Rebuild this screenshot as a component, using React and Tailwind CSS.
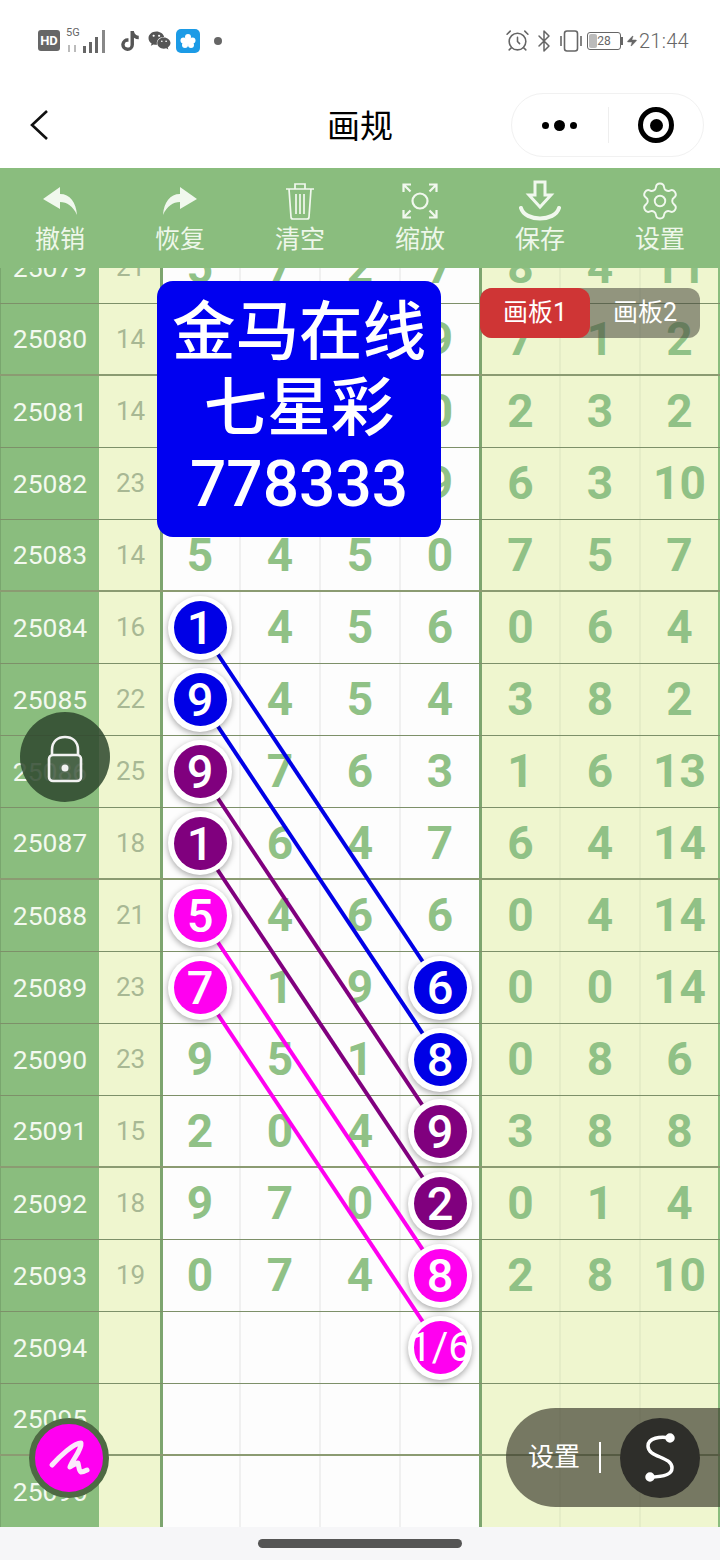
import { AlarmClock, Bluetooth, Zap, Settings } from 'lucide-react'
import { FaTiktok, FaWeixin } from 'react-icons/fa'

const BLUE = 'bg-[#0000e6]'
const PURPLE = 'bg-[#80007e]'
const PINK = 'bg-[#ff00f0]'

// period, sum, four draw columns, three stat columns. marks = column -> colour class
const ROWS = [
  { id: 25079, sum: 21, nums: [5, 7, 2, 7], stats: [8, 4, 11] },
  { id: 25080, sum: 14, nums: [1, 2, 3, 9], stats: [7, 1, 2], thick: true },
  { id: 25081, sum: 14, nums: [4, 3, 7, 0], stats: [2, 3, 2] },
  { id: 25082, sum: 23, nums: [6, 8, 0, 9], stats: [6, 3, 10] },
  { id: 25083, sum: 14, nums: [5, 4, 5, 0], stats: [7, 5, 7], thick: true },
  { id: 25084, sum: 16, nums: [1, 4, 5, 6], stats: [0, 6, 4], marks: { 0: BLUE } },
  { id: 25085, sum: 22, nums: [9, 4, 5, 4], stats: [3, 8, 2], marks: { 0: BLUE } },
  { id: 25086, sum: 25, nums: [9, 7, 6, 3], stats: [1, 6, 13], marks: { 0: PURPLE } },
  { id: 25087, sum: 18, nums: [1, 6, 4, 7], stats: [6, 4, 14], marks: { 0: PURPLE }, thick: true },
  { id: 25088, sum: 21, nums: [5, 4, 6, 6], stats: [0, 4, 14], marks: { 0: PINK } },
  { id: 25089, sum: 23, nums: [7, 1, 9, 6], stats: [0, 0, 14], marks: { 0: PINK, 3: BLUE } },
  { id: 25090, sum: 23, nums: [9, 5, 1, 8], stats: [0, 8, 6], marks: { 3: BLUE } },
  { id: 25091, sum: 15, nums: [2, 0, 4, 9], stats: [3, 8, 8], marks: { 3: PURPLE }, thick: true },
  { id: 25092, sum: 18, nums: [9, 7, 0, 2], stats: [0, 1, 4], marks: { 3: PURPLE } },
  { id: 25093, sum: 19, nums: [0, 7, 4, 8], stats: [2, 8, 10], marks: { 3: PINK } },
  { id: 25094, sum: '', nums: ['', '', '', '1/6'], stats: ['', '', ''], marks: { 3: PINK } },
  { id: 25095, sum: '', nums: ['', '', '', ''], stats: ['', '', ''], thick: true },
  { id: 25096, sum: '', nums: ['', '', '', ''], stats: ['', '', ''] },
]

const LINES = [
  [5, 10, '#0000e6'],
  [6, 11, '#0000e6'],
  [7, 12, '#80007e'],
  [8, 13, '#80007e'],
  [9, 14, '#ff00f0'],
  [10, 15, '#ff00f0'],
]

function StatusBar() {
  return (
    <div className="h-[84px] bg-white flex items-center justify-between pl-[38px] pr-[31px] pb-[3px] text-[#666]">
      <div className="flex items-center h-6">
        <div className="w-[22px] h-[21px] rounded-[3px] bg-[#666] text-white text-[13px] font-bold flex items-center justify-center leading-none">HD</div>
        <div className="relative w-[40px] h-[26px] ml-[6px]">
          <span className="absolute left-0 -top-[1px] text-[11px] leading-none">5G</span>
          <svg width="40" height="26" viewBox="0 0 40 26" className="absolute left-0 top-0">
            <rect x="2" y="17" width="2" height="7" fill="#bbb" />
            <rect x="8" y="17" width="2" height="7" fill="#bbb" />
            <rect x="17" y="18" width="3" height="7" fill="#666" />
            <rect x="23" y="14" width="3" height="11" fill="#666" />
            <rect x="29" y="9" width="3" height="16" fill="#666" />
            <rect x="36" y="2" width="3" height="23" fill="#888" />
          </svg>
        </div>
        <FaTiktok className="ml-[14px] text-[#555]" size={20} />
        <FaWeixin className="ml-[8px] text-[#555]" size={23} />
        <div className="ml-[5px] w-6 h-6 rounded-[5px] bg-[#1c9be6] flex items-center justify-center">
          <svg width="16" height="16" viewBox="0 0 16 16">
            <circle cx="8" cy="4" r="3" fill="#fff" />
            <circle cx="3.5" cy="7.5" r="3" fill="#fff" />
            <circle cx="12.5" cy="7.5" r="3" fill="#fff" />
            <circle cx="5" cy="12" r="3" fill="#fff" />
            <circle cx="11" cy="12" r="3" fill="#fff" />
            <circle cx="8" cy="8.5" r="3" fill="#fff" />
          </svg>
        </div>
        <div className="ml-[14px] w-2 h-2 rounded-full bg-[#666]" />
      </div>
      <div className="flex items-center h-6">
        <AlarmClock size={25} strokeWidth={1.5} />
        <Bluetooth size={24} strokeWidth={1.5} className="ml-[2px]" />
        <svg width="26" height="24" viewBox="0 0 26 24" fill="none" stroke="currentColor" strokeWidth="1.6" className="ml-[2px]">
          <rect x="6.5" y="2" width="13" height="20" rx="2.5" />
          <path d="M3 7v10M23 7v10" />
        </svg>
        <div className="ml-[3px] relative w-[34px] h-[18px] rounded-[3px] border border-[#666] flex items-center justify-center text-[12px] leading-none">
          <div className="absolute left-[1px] top-[1px] bottom-[1px] w-[8px] bg-[#bbb] rounded-[2px]" />
          <span className="relative">28</span>
        </div>
        <div className="w-[2px] h-2 bg-[#666]" />
        <Zap size={12} fill="#666" strokeWidth={1} className="ml-[3px]" />
        <span className="ml-[1px] text-[20px] leading-none tracking-[0.3px] font-light">21:44</span>
      </div>
    </div>
  )
}

function NavBar() {
  return (
    <div className="relative h-[84px] bg-white flex items-center justify-center">
      <svg width="20" height="32" viewBox="0 0 20 32" className="absolute left-[29px] top-[25px]">
        <path d="M18 2 L3 16 L18 30" fill="none" stroke="#111" strokeWidth="2.6" />
      </svg>
      <span className="text-[33px] leading-none text-black">画规</span>
      <div className="absolute left-[511px] top-[9px] w-[193px] h-[64px] rounded-full border border-[#f1f1f1] flex items-center">
        <div className="w-[96px] flex items-center justify-center gap-[5px] pr-[2px]">
          <span className="w-[7px] h-[7px] rounded-full bg-black" />
          <span className="w-[11px] h-[11px] rounded-full bg-black" />
          <span className="w-[7px] h-[7px] rounded-full bg-black" />
        </div>
        <div className="w-px h-9 bg-[#eee]" />
        <div className="flex-1 flex items-center justify-center">
          <div className="w-[36px] h-[36px] rounded-full border-[5px] border-black flex items-center justify-center">
            <div className="w-[13px] h-[13px] rounded-full bg-black" />
          </div>
        </div>
      </div>
    </div>
  )
}

function ToolItem({ label, children }) {
  return (
    <div className="flex flex-col items-center w-[120px]">
      <div className="h-[42px] w-[44px] flex items-center justify-center text-[#f1f8ee]">{children}</div>
      <span className="text-[25px] leading-[30px] text-[#eef7ea] mt-[3px]">{label}</span>
    </div>
  )
}

function Toolbar() {
  return (
    <div className="h-[100px] bg-[#8abd7e] flex pt-[12px] relative z-40">
      <ToolItem label="撤销">
        <svg width="36" height="30" viewBox="0 0 36 30" fill="currentColor">
          <path d="M18 1 L1 13 L18 23 V16 C25 16 31 20 35 29 C34 16 28 8 18 8 Z" />
        </svg>
      </ToolItem>
      <ToolItem label="恢复">
        <svg width="36" height="30" viewBox="0 0 36 30" fill="currentColor">
          <path d="M18 1 L35 13 L18 23 V16 C11 16 5 20 1 29 C2 16 8 8 18 8 Z" />
        </svg>
      </ToolItem>
      <ToolItem label="清空">
        <svg width="30" height="38" viewBox="0 0 30 38" fill="none" stroke="currentColor" strokeWidth="1.7">
          <path d="M1 7h28M10 7V2h10v5M4 7l2 28c0 1 1 2 2 2h14c1 0 2-1 2-2l2-28M11 12v20M15 12v20M19 12v20" />
        </svg>
      </ToolItem>
      <ToolItem label="缩放">
        <svg width="36" height="36" viewBox="0 0 36 36" fill="none" stroke="currentColor" strokeWidth="2.2">
          <circle cx="18" cy="18" r="7.5" />
          <path d="M1.5 9V1.5H9M1.5 1.5l7 7M34.5 9V1.5H27M34.5 1.5l-7 7M1.5 27v7.5H9M1.5 34.5l7-7M34.5 27v7.5H27M34.5 34.5l-7-7" />
        </svg>
      </ToolItem>
      <ToolItem label="保存">
        <svg width="42" height="42" viewBox="0 0 42 42" fill="none" stroke="currentColor" strokeWidth="3">
          <path d="M16 2h10v13h6L21 27 10 15h6z" />
          <path d="M2 28c4 14 34 14 38 0" strokeLinecap="round" strokeWidth="4" />
        </svg>
      </ToolItem>
      <ToolItem label="设置"><Settings size={42} strokeWidth={1.1} /></ToolItem>
    </div>
  )
}

function Ball({ value, color }) {
  return (
    <div className="relative z-20 w-[64px] h-[64px] shrink-0 rounded-full bg-white shadow-[0_2px_6px_rgba(0,0,0,0.35)] flex items-center justify-center font-medium">
      <div className={`w-[53px] h-[53px] rounded-full ${color} flex items-center justify-center`}>
        <span className={value === '1/6' ? 'text-white text-[40px] font-normal leading-none whitespace-nowrap' : 'text-white text-[47px] leading-none'}>{value}</span>
      </div>
    </div>
  )
}

function Row({ row }) {
  const lineCls = row.thick ? 'border-b-2 border-[#8b9b72]' : 'border-b border-[#7d9069]'
  return (
    <div className={`h-[72px] grid grid-cols-[99px_62px_80px_80px_80px_80px_80px_80px_79px] ${lineCls}`}>
      <div className="bg-[#8abd7e] border-l border-[#79a66e] flex items-center justify-center text-[26.5px] text-[#f3f9ef]">{row.id}</div>
      <div className="bg-[#eff6cf] border-r border-[#7da56f] pl-[2px] flex items-center justify-center text-[26px] text-[#a8b894]">{row.sum}</div>
      {row.nums.map((n, i) => (
        <div
          key={i}
          className={`bg-[#fdfdfd] flex items-center justify-center text-[46px] font-bold text-[#90c186] ${i === 0 ? 'border-l-2 border-l-[#7da56f] pr-[2px]' : ''} ${i < 3 ? 'border-r-2 border-r-[#f0f0f0]' : 'border-r-2 border-r-[#7da56f]'}`}
        >
          {row.marks && row.marks[i] ? <Ball value={n} color={row.marks[i]} /> : n}
        </div>
      ))}
      {row.stats.map((n, i) => (
        <div
          key={i}
          className={`bg-[#eff6cf] flex items-center justify-center text-[46px] font-bold text-[#90c186] ${i === 0 ? 'border-l border-l-[#7da56f]' : ''} ${i < 2 ? 'border-r-2 border-r-[#e5edc7]' : 'border-r-2 border-r-[#8abd7e]'}`}
        >
          {n}
        </div>
      ))}
    </div>
  )
}

function Table() {
  return (
    <div className="relative h-[1259px] overflow-hidden">
      <div className="relative -mt-[36px]">
        {ROWS.map((r) => (
          <Row key={r.id} row={r} />
        ))}
        <svg width="720" height="1296" className="absolute left-0 top-0 z-10 pointer-events-none">
          {LINES.map(([a, b, c]) => (
            <line key={a} x1="200" y1={a * 72 + 35.5} x2="440" y2={b * 72 + 35.5} stroke={c} strokeWidth="4" />
          ))}
        </svg>
      </div>

      {/* floating overlays */}
      <div className="absolute z-30 left-[157px] top-[13px] w-[284px] h-[256px] rounded-[16px] bg-[#0000f0] flex flex-col items-center justify-center text-white text-[63.5px] leading-[76px] font-medium">
        <span>金马在线</span>
        <span>七星彩</span>
        <span className="text-[64px]">778333</span>
      </div>
      <div className="absolute z-30 left-[480px] top-[20px] w-[220px] h-[50px] rounded-[12px] bg-[rgba(70,70,60,0.55)] flex text-white text-[25px]">
        <div className="w-[110px] rounded-[12px] bg-[#cf3535] flex items-center justify-center">画板1</div>
        <div className="w-[110px] flex items-center justify-center">画板2</div>
      </div>
      <div className="absolute z-30 left-[20px] top-[444px] w-[90px] h-[90px] rounded-full bg-[rgba(45,70,45,0.85)] flex items-center justify-center text-[#f2f2f2]">
        <svg width="36" height="48" viewBox="0 0 36 48" fill="none" stroke="currentColor" strokeWidth="2.6" className="mt-[3px]">
          <path d="M5 20V15C5 6 11 2 18 2s13 4 13 13v5" />
          <rect x="2" y="20" width="32" height="26" rx="4" fill="rgba(255,255,255,0.08)" />
          <circle cx="18" cy="33" r="3.5" fill="currentColor" stroke="none" />
        </svg>
      </div>
      <div className="absolute z-30 left-[29px] top-[1150px] w-[80px] h-[80px] rounded-full bg-[#ff00f0] border-[6px] border-[#4e6a44] flex items-center justify-center">
        <svg width="46" height="40" viewBox="0 0 46 40" fill="none" stroke="#fbe9fb" strokeWidth="5" strokeLinecap="round" strokeLinejoin="round">
          <path d="M6 27C14 18 28 5 35 5C36 12 26 22 24 29C27 27 30 25 32 25C33 29 33 33 35 34C37 34 39 33 41 32" />
        </svg>
      </div>
      <div className="absolute z-30 left-[506px] top-[1140px] w-[214px] h-[99px] rounded-l-[50px] bg-[rgba(60,60,45,0.68)] flex items-center">
        <span className="ml-[22px] text-[26px] text-white">设置</span>
        <div className="ml-[19px] w-[2px] h-[31px] bg-white" />
        <div className="ml-[19px] w-[80px] h-[80px] rounded-full bg-[#2e2e2a] flex items-center justify-center">
          <svg width="44" height="56" viewBox="0 0 44 56" fill="none" stroke="#fff" strokeWidth="3.5" strokeLinecap="round">
            <path d="M32 8C22 6 10 8 10 16C10 28 34 26 34 38C34 46 22 47 12 47" />
            <circle cx="32" cy="8" r="3" fill="#fff" />
            <circle cx="12" cy="47" r="3" fill="#fff" />
          </svg>
        </div>
      </div>
    </div>
  )
}

export default function App() {
  return (
    <div className="w-[720px] h-[1560px] bg-white overflow-hidden font-[Roboto,'Noto_Sans_CJK_SC',sans-serif]">
      <StatusBar />
      <NavBar />
      <Toolbar />
      <Table />
      <div className="h-[33px] bg-[#f6f6f8] flex justify-center pt-[12px]">
        <div className="w-[204px] h-[9px] rounded-full bg-[#555]" />
      </div>
    </div>
  )
}
